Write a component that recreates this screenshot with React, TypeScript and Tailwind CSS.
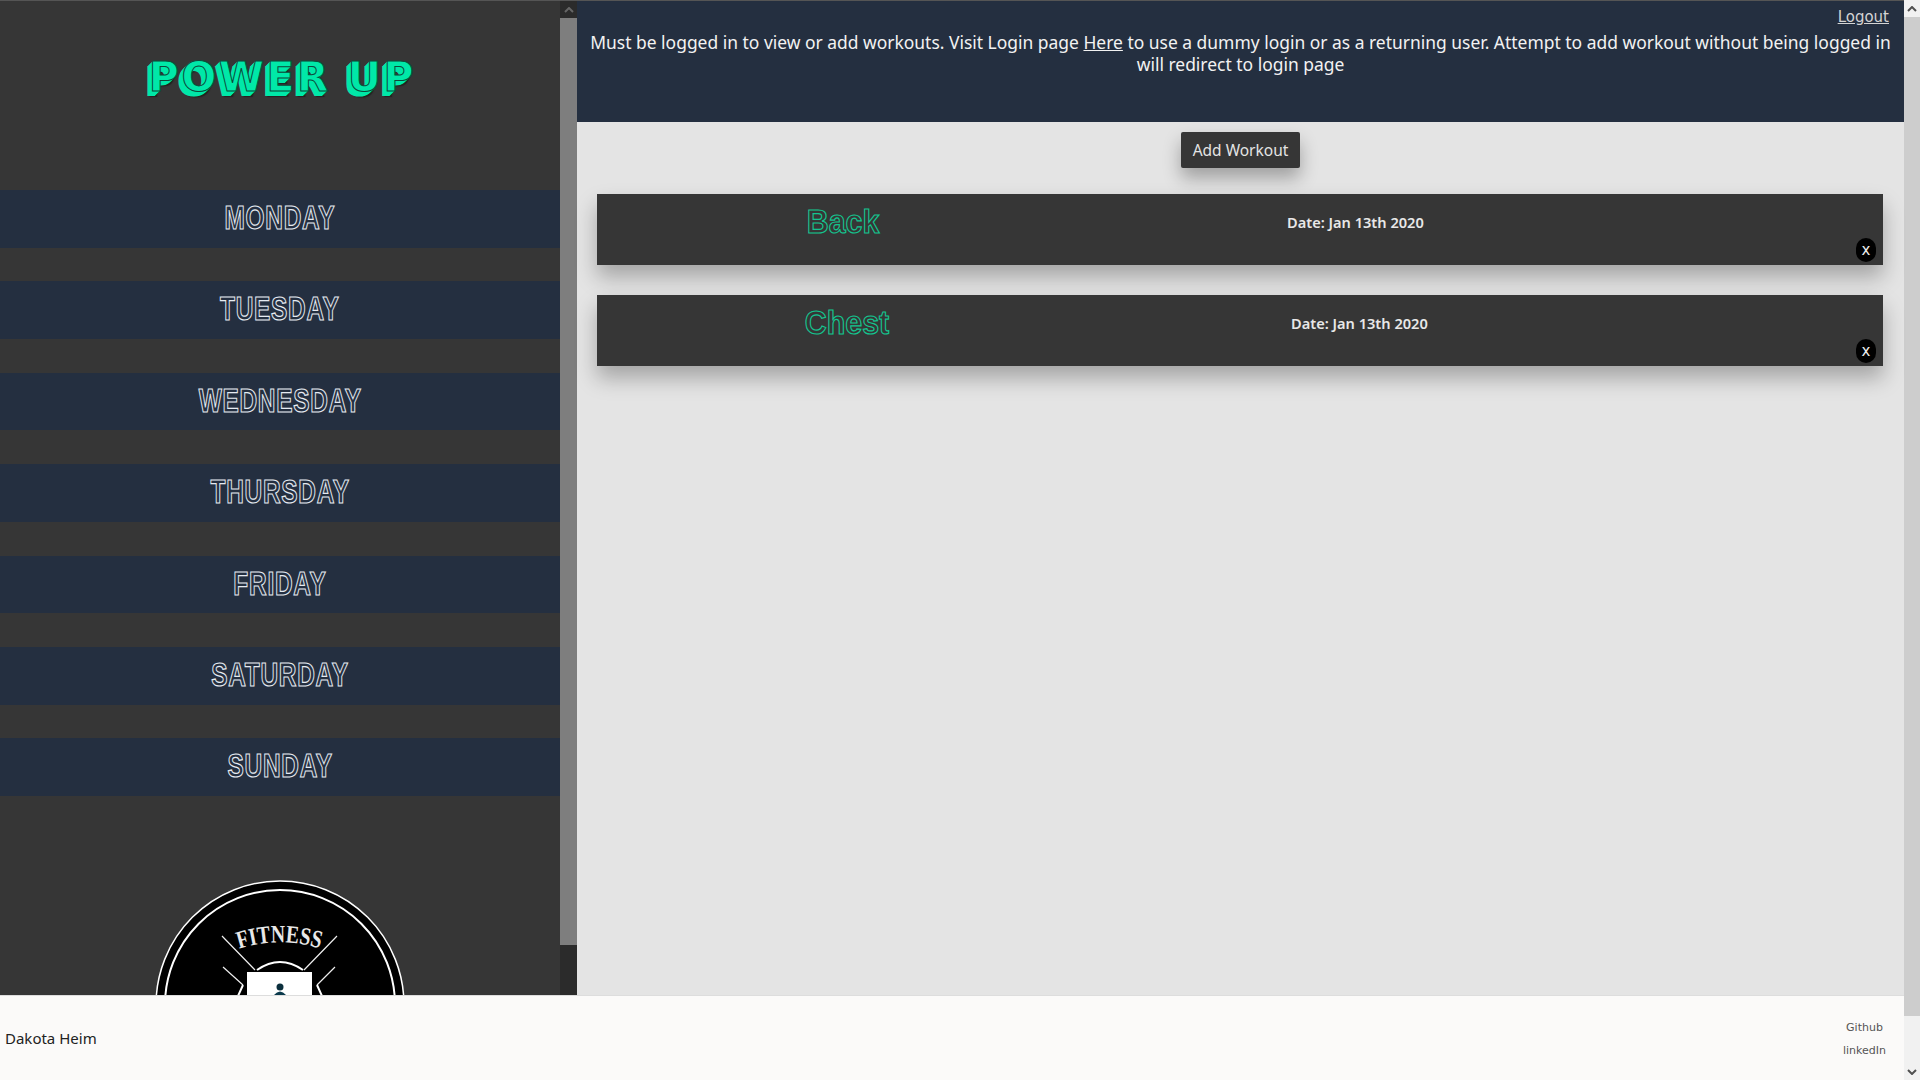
const days = ["MONDAY", "TUESDAY", "WEDNESDAY", "THURSDAY", "FRIDAY", "SATURDAY", "SUNDAY"]

const workouts = [
  { name: "Back", date: "Date: Jan 13th 2020", nameClass: "w-[296px]", dateClass: "ml-[394px]" },
  { name: "Chest", date: "Date: Jan 13th 2020", nameClass: "w-[300px]", dateClass: "ml-[394px]" },
]

function FitnessLogo() {
  return (
    <svg viewBox="0 0 250 250" className="block h-[250px] w-[250px] shrink-0">
      <circle cx="125" cy="125" r="124" fill="#000" stroke="#fff" strokeWidth="1.5" />
      <circle cx="125" cy="125" r="115" fill="none" stroke="#fff" strokeWidth="2" />
      <path d="M67 56 L100 90 M182 56 L149 90 M68 87 L88 105 M180 87 L162 105" stroke="#eee" strokeWidth="1.2" />
      <path d="M102 90 Q125 74 148 90 M88 105 L83 116 M162 105 L167 116" fill="none" stroke="#fff" strokeWidth="2" />
      <rect x="92" y="92" width="65" height="60" fill="#fff" />
      <circle cx="125" cy="107" r="3.5" fill="#0b2f3d" />
      <path d="M119 115 q6 -7 12 0 l-2 3 h-8 z" fill="#0b3a4c" />
      <defs>
        <path id="fitness-arc" d="M84 69 A130 130 0 0 1 166 69" />
      </defs>
      <text fill="#e8e8e8" fontFamily="Liberation Serif, serif" fontWeight="700" fontSize="25">
        <textPath href="#fitness-arc" startOffset="0" textLength="82" lengthAdjust="spacingAndGlyphs">
          FITNESS
        </textPath>
      </text>
    </svg>
  )
}

function Arrow({ up, color }: { up: boolean; color: string }) {
  return (
    <svg viewBox="0 0 10 6" className="h-[6px] w-[10px]">
      <path d={up ? "M1 5 L5 1 L9 5" : "M1 1 L5 5 L9 1"} fill="none" stroke={color} strokeWidth="2" />
    </svg>
  )
}

export default function App() {
  return (
    <div className="flex h-screen w-full overflow-hidden bg-[#e4e4e4] font-['DejaVu_Sans',sans-serif]">
      <div className="flex min-w-0 flex-1 flex-col">
        <div className="flex min-h-0 flex-1">
          <aside className="flex w-[577px] shrink-0 border-t border-t-[#555] bg-[#363636]">
            <div className="flex w-[560px] flex-col items-center overflow-hidden">
              <div className="flex h-[189px] w-full shrink-0 justify-center pt-[52px] pl-[5px]">
                <h1 className="h-[48px] font-['DejaVu_Sans',sans-serif] text-[41px] leading-[48px] font-bold tracking-[2.5px] whitespace-nowrap text-[#00e8a8] [-webkit-text-stroke:1px_#0c4a3a] [text-shadow:-1px_1px_0_#00e8a8,-2px_2px_0_#00e8a8,-3px_3px_0_#00e8a8,-4px_4px_0_#00e8a8,-5px_5px_0_#00e8a8,-3px_6px_1px_#222]">
                  POWER UP
                </h1>
              </div>
              <nav className="flex w-full flex-col gap-[33.8px]">
                {days.map((day) => (
                  <a key={day} className="flex h-[57.6px] items-center justify-center bg-[#242f40] pb-[2px]">
                    <span className="scale-x-[0.74] font-['Liberation_Sans',sans-serif] text-[33px] font-bold tracking-[1px] text-transparent [-webkit-text-stroke:1.2px_#e6ebf2]">
                      {day}
                    </span>
                  </a>
                ))}
              </nav>
              <div className="mt-[84px]">
                <FitnessLogo />
              </div>
            </div>
            <div className="flex w-[17px] shrink-0 flex-col bg-[#2b2b2b]">
              <div className="flex h-[17px] items-center justify-center">
                <Arrow up color="#666" />
              </div>
              <div className="h-[927px] bg-[#7e7e7e]" />
            </div>
          </aside>

          <main className="flex min-w-0 flex-1 flex-col">
            <header className="h-[122px] shrink-0 border-t border-t-[#555] bg-[#242f40] px-[13px] text-center text-[#f2f2f2]">
              <div className="h-[24px] pt-[7px] pr-[2px] text-right text-[15px] leading-[18px] text-[#d4d4d4]">
                <a className="underline">Logout</a>
              </div>
              <p className="pt-[7px] font-['Noto_Sans',sans-serif] text-[17.45px] leading-[21.5px]">
                Must be logged in to view or add workouts. Visit Login page <a className="underline">Here</a> to use a dummy login or as a returning user. Attempt to add workout without being logged in will redirect to login page
              </p>
            </header>
            <div className="flex justify-center pt-[10px]">
              <button className="h-[36px] w-[119px] rounded-[2px] bg-[#363636] pt-[1px] font-['Noto_Sans',sans-serif] text-[15.5px] text-[#e4e4e4] shadow-[0_10px_18px_rgba(0,0,0,0.3)]">
                Add Workout
              </button>
            </div>
            <div className="flex flex-col gap-[30px] pt-[26px] pr-[21px] pl-[20px]">
              {workouts.map((w) => (
                <div key={w.name} className="relative flex h-[71px] bg-[#363636] shadow-[0_12px_20px_rgba(0,0,0,0.28)]">
                  <div className={`${w.nameClass} flex justify-end pt-[9px]`}>
                    <span className="w-[100px] scale-x-[0.92] text-center font-['Liberation_Sans',sans-serif] text-[33px] leading-[38px] font-bold text-transparent [-webkit-text-stroke:1.2px_#14c48f]">
                      {w.name}
                    </span>
                  </div>
                  <span className={`${w.dateClass} pt-[19px] font-['Noto_Sans',sans-serif] text-[14.6px] leading-[19px] font-semibold whitespace-nowrap text-[#e8e8e8]`}>
                    {w.date}
                  </span>
                  <button className="absolute right-[7px] bottom-[3px] flex h-[24px] w-[20px] items-center justify-center rounded-full bg-black text-[15px] text-[#eee]">
                    x
                  </button>
                </div>
              ))}
            </div>
          </main>
        </div>

        <footer className="flex h-[85px] shrink-0 items-center justify-between border-t border-t-[#ddd] bg-[#fbfaf9] pr-[18px] pl-[5px]">
          <span className="pt-[1px] font-['Noto_Sans',sans-serif] text-[15px] text-[#222]">Dakota Heim</span>
          <div className="flex flex-col items-center gap-[6px] pt-[1px] text-[11px] leading-[17px] text-[#555]">
            <a>Github</a>
            <a>linkedIn</a>
          </div>
        </footer>
      </div>

      <div className="flex w-[16px] shrink-0 flex-col bg-[#f1f1f1]">
        <div className="flex h-[17px] shrink-0 items-center justify-center">
          <Arrow up color="#505050" />
        </div>
        <div className="h-[999px] shrink-0 bg-[#cdcdcd]" />
        <div className="mt-auto flex h-[17px] shrink-0 items-center justify-center">
          <Arrow up={false} color="#505050" />
        </div>
      </div>
    </div>
  )
}
